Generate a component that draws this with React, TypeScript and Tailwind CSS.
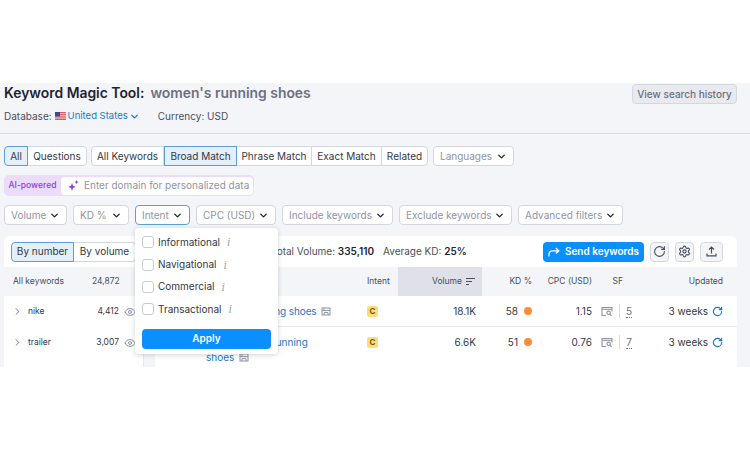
import React from "react"
import { ChevronDown, ChevronRight, Eye, RotateCw, Settings } from "lucide-react"

const font = { fontFamily: "Inter, 'Liberation Sans', sans-serif" }

function Flag() {
    return (
        <svg width="11" height="8" viewBox="0 0 11 8" className="shrink-0">
            <rect width="11" height="8" fill="#e0565b" />
            <rect y="1.2" width="11" height="1" fill="#f4d6d8" />
            <rect y="3.4" width="11" height="1" fill="#f4d6d8" />
            <rect y="5.6" width="11" height="1" fill="#f4d6d8" />
            <rect width="5" height="4.4" fill="#3c4a8f" />
        </svg>
    )
}

function Dropdown({ label, active, width }: { label: string; active?: boolean; width: string }) {
    return (
        <div className={`flex h-[20px] items-center justify-between rounded-[4px] border bg-white pl-[6px] pr-[6px] text-[10px] text-[#8f94a3] ${width} ${active ? "border-[#5a9fd8]" : "border-[#d5d7de]"}`}>
            <span className="whitespace-nowrap">{label}</span>
            <ChevronDown size={11} strokeWidth={3} className="shrink-0 text-[#1d2433]" />
        </div>
    )
}

function Segment({ label, active, width }: { label: string; active?: boolean; width: string }) {
    return (
        <div className={`flex h-[20px] items-center justify-center whitespace-nowrap border text-[10px] text-[#333845] first:rounded-l-[4px] last:rounded-r-[4px] ${width} ${active ? "z-10 border-[#5a9fd8] bg-[#e3eff9]" : "-ml-px border-[#d5d7de] bg-white"}`}>
            {label}
        </div>
    )
}

function InfoMark() {
    return <span className="ml-[7px] text-[12px] italic leading-none text-[#9ca1ad]" style={{ fontFamily: "'Liberation Serif', serif" }}>i</span>
}

function IntentOption({ label }: { label: string }) {
    return (
        <div className="flex h-[22.4px] items-center">
            <div className="h-[12px] w-[12px] rounded-[3px] border border-[#c9cbd4] bg-white" />
            <span className="ml-[4px] text-[10px] text-[#333845]">{label}</span>
            <InfoMark />
        </div>
    )
}

function SerpIcon() {
    return (
        <svg width="12" height="11" viewBox="0 0 12 11" fill="none" stroke="#8f94a3" strokeWidth="1.1">
            <path d="M5 9.5H1V1.5h10v4" />
            <path d="M1 3.3h10" />
            <circle cx="7.6" cy="6.8" r="1.7" />
            <path d="M9 8.2l1.6 1.6" />
        </svg>
    )
}

function SaveIcon() {
    return (
        <svg width="10" height="9" viewBox="0 0 10 9" fill="none" stroke="#8f94a3" strokeWidth="1">
            <rect x="1" y="1" width="8" height="7" />
            <path d="M1 3.6h8M3 1v2.6M7 8V5.6H3V8" />
        </svg>
    )
}

function SideRow({ name, count }: { name: string; count: string }) {
    return (
        <div className="flex h-[31px] items-center pl-[8px] text-[8.5px] text-[#333845]">
            <ChevronRight size={11} className="shrink-0 text-[#6c7080]" />
            <span className="ml-[5px] w-[60px]">{name}</span>
            <span className="w-[31px] text-right">{count}</span>
            <Eye size={12} className="ml-[5px] shrink-0 text-[#8f94a3]" />
        </div>
    )
}

function TableRow({ keyword, volume, kd, cpc, sf, border }: { keyword: React.ReactNode; volume: string; kd: string; cpc: string; sf: string; border?: boolean }) {
    return (
        <div className={`flex items-start text-[10px] text-[#333845] ${border ? "h-[31px] border-b border-[#e8e9ef]" : "h-[40px]"}`}>
            <div className="w-[212px] pl-[51px] pt-[8px] leading-[15px] text-[#1e77c9]">{keyword}</div>
            <div className="flex h-[30px] w-[31px] items-center">
                <span className="flex h-[11px] w-[11px] items-center justify-center rounded-[2px] bg-[#fbdc80] text-[8px] font-bold text-[#7a5a00]">C</span>
            </div>
            <div className="flex h-[30px] w-[78px] items-center justify-end">{volume}</div>
            <div className="flex h-[30px] w-[56px] items-center justify-end">
                {kd}
                <span className="ml-[6px] h-[8px] w-[8px] rounded-full bg-[#ff8c3a]" />
            </div>
            <div className="flex h-[30px] w-[60px] items-center justify-end">{cpc}</div>
            <div className="flex h-[30px] w-[40px] items-center justify-end text-[#6c7080]">
                <SerpIcon />
                <span className="mx-[6px] h-[14px] w-px bg-[#d5d7de]" />
                <span className="border-b border-dotted border-[#6c7080] leading-[12px]">{sf}</span>
            </div>
            <div className="flex h-[30px] w-[91px] items-center justify-end">
                3 weeks
                <RotateCw size={11} strokeWidth={2.6} className="ml-[4px] text-[#1e77c9]" />
            </div>
        </div>
    )
}

export default function App() {
    return (
        <div className="h-[450px] w-[750px] overflow-hidden bg-white pt-[83px]" style={font}>
            <div className="relative h-[284px] overflow-hidden bg-[#f4f5f9]">
                {/* Encabezado */}
                <div className="flex h-[51px] items-start justify-between border-b border-[#dcdde2] pl-[4px] pr-[13px]">
                    <div>
                        <h1 className="whitespace-nowrap text-[13.9px] font-semibold leading-[20px] text-[#1d2433]">
                            Keyword Magic Tool:
                            <span className="ml-[6px] text-[#6c7080]">women's running shoes</span>
                        </h1>
                        <div className="mt-[6px] flex items-center whitespace-nowrap text-[10px] leading-[14px] text-[#4a4f5c]">
                            Database:
                            <span className="ml-[3px]"><Flag /></span>
                            <span className="ml-[2px] text-[9.5px] text-[#1e77c9]">United States</span>
                            <ChevronDown size={11} strokeWidth={3} className="ml-[1px] text-[#1e77c9]" />
                            <span className="ml-[18px]">Currency: USD</span>
                        </div>
                    </div>
                    <div className="mt-[1px] flex h-[20px] w-[105px] items-center justify-center rounded-[4px] border border-[#d5d7de] bg-[#e9eaef] text-[10px] font-medium text-[#6c7080]">
                        View search history
                    </div>
                </div>

                {/* Pestañas */}
                <div className="mt-[12px] flex items-center pl-[4px]">
                    <div className="flex">
                        <Segment label="All" active width="w-[24px]" />
                        <Segment label="Questions" width="w-[60px]" />
                    </div>
                    <div className="ml-[5px] flex">
                        <Segment label="All Keywords" width="w-[73px]" />
                        <Segment label="Broad Match" active width="w-[73px]" />
                        <Segment label="Phrase Match" width="w-[76px]" />
                        <Segment label="Exact Match" width="w-[71px]" />
                        <Segment label="Related" width="w-[47px]" />
                    </div>
                    <div className="ml-[5px]"><Dropdown label="Languages" width="w-[81px]" /></div>
                </div>

                {/* Campo AI */}
                <div className="ml-[4px] mt-[9px] flex h-[21px] w-[250px] items-center rounded-[5px] bg-[#ecdcfb] pr-[1px]">
                    <span className="w-[57px] text-center text-[8.5px] font-medium text-[#8a3fe0]">AI-powered</span>
                    <div className="flex h-[18px] flex-1 items-center rounded-[4px] bg-white pl-[7px] text-[10px] text-[#8f94a3]">
                        <svg width="11" height="11" viewBox="0 0 11 11" fill="#8a3fe0">
                            <path d="M4 3l1 2.8L7.8 7 5 8 4 11 3 8 .2 7 3 5.8zM8.5 0l.6 1.5 1.5.6-1.5.6-.6 1.5-.6-1.5-1.5-.6 1.5-.6z" />
                        </svg>
                        <span className="ml-[5px] whitespace-nowrap">Enter domain for personalized data</span>
                    </div>
                </div>

                {/* Filtros */}
                <div className="ml-[4px] mt-[9px] flex gap-[6px]">
                    <Dropdown label="Volume" width="w-[63px]" />
                    <Dropdown label="KD %" width="w-[56px]" />
                    <Dropdown label="Intent" active width="w-[55px]" />
                    <Dropdown label="CPC (USD)" width="w-[80px]" />
                    <Dropdown label="Include keywords" width="w-[111px]" />
                    <Dropdown label="Exclude keywords" width="w-[113px]" />
                    <Dropdown label="Advanced filters" width="w-[105px]" />
                </div>

                {/* Tarjeta de resultados */}
                <div className="ml-[4px] mt-[11px] h-[131px] w-[733px] overflow-hidden rounded-t-[6px] bg-white">
                    <div className="flex h-[31px] items-center pl-[7px] pr-[14px] text-[10px] text-[#4a4f5c]">
                        <div className="flex">
                            <Segment label="By number" active width="w-[63px]" />
                            <Segment label="By volume" width="w-[63px]" />
                        </div>
                        <span className="ml-[135px] whitespace-nowrap">Total Volume: <b className="font-semibold text-[#1d2433]">335,110</b></span>
                        <span className="ml-[9px] whitespace-nowrap">Average KD: <b className="font-semibold text-[#1d2433]">25%</b></span>
                        <div className="ml-auto flex items-center gap-[6px]">
                            <div className="flex h-[20px] w-[101px] items-center justify-center rounded-[4px] bg-[#0a8fff] text-[10px] font-semibold text-white">
                                <svg width="12" height="10" viewBox="0 0 12 10" fill="none" stroke="#fff" strokeWidth="1.3" className="mr-[5px]">
                                    <path d="M1 9.5V7c0-2 1.5-3.2 3.5-3.2H10.5M7.8 1l3 2.8-3 2.8" />
                                </svg>
                                Send keywords
                            </div>
                            <div className="flex h-[20px] w-[19px] items-center justify-center rounded-[4px] border border-[#d5d7de] bg-[#f4f5f9] text-[#4a4f5c]"><RotateCw size={13} /></div>
                            <div className="flex h-[20px] w-[19px] items-center justify-center rounded-[4px] border border-[#d5d7de] bg-[#f4f5f9] text-[#4a4f5c]"><Settings size={13} /></div>
                            <div className="flex h-[20px] w-[23px] items-center justify-center rounded-[4px] border border-[#d5d7de] bg-[#f4f5f9]">
                                <svg width="11" height="11" viewBox="0 0 11 11" fill="none" stroke="#4a4f5c" strokeWidth="1.2">
                                    <path d="M5.5 7.5V1.2M3 3.5l2.5-2.5L8 3.5M1 7.5v2.3h9V7.5" />
                                </svg>
                            </div>
                        </div>
                    </div>

                    <div className="flex h-[100px]">
                        {/* Lista lateral */}
                        <div className="w-[140px] shrink-0 border-r border-[#e8e9ef]">
                            <div className="flex h-[29px] items-center bg-[#f4f5f9] pl-[9px] text-[8.5px] text-[#4a4f5c]">
                                <span className="w-[79px]">All keywords</span>
                                <span className="w-[27px] text-right">24,872</span>
                            </div>
                            <SideRow name="nike" count="4,412" />
                            <SideRow name="trailer" count="3,007" />
                        </div>
                        <div className="w-[11px] shrink-0 bg-[#f4f5f9]" />

                        {/* Tabla */}
                        <div className="flex-1">
                            <div className="flex h-[29px] items-center bg-[#f4f5f9] text-[8.5px] text-[#4a4f5c]">
                                <div className="w-[212px]" />
                                <div className="w-[31px]">Intent</div>
                                <div className="flex h-full w-[84px] items-center justify-end bg-[#dfe0e8] pr-[7px]">
                                    Volume
                                    <svg width="9" height="7" viewBox="0 0 9 7" stroke="#4a4f5c" strokeWidth="1" className="ml-[4px]">
                                        <path d="M0 .5h9M0 3.5h6M0 6.5h3" />
                                    </svg>
                                </div>
                                <div className="w-[50px] text-right">KD %</div>
                                <div className="w-[60px] text-right">CPC (USD)</div>
                                <div className="w-[31px] text-right">SF</div>
                                <div className="w-[100px] text-right">Updated</div>
                            </div>
                            <TableRow
                                keyword={<span className="whitespace-nowrap tracking-[-0.1px]">women's running shoes <span className="ml-[2px] inline-block align-[-1px]"><SaveIcon /></span></span>}
                                volume="18.1K" kd="58" cpc="1.15" sf="5" border
                            />
                            <TableRow
                                keyword={<span>women's trail running<br />shoes <span className="ml-[2px] inline-block align-[-1px]"><SaveIcon /></span></span>}
                                volume="6.6K" kd="51" cpc="0.76" sf="7"
                            />
                        </div>
                    </div>
                </div>

                {/* Menú Intent */}
                <div className="absolute left-[135px] top-[145px] h-[126px] w-[143px] rounded-[4px] bg-white px-[7px] pt-[3px] shadow-[0_1px_5px_rgba(30,35,60,0.2)]">
                    <IntentOption label="Informational" />
                    <IntentOption label="Navigational" />
                    <IntentOption label="Commercial" />
                    <IntentOption label="Transactional" />
                    <div className="mt-[8px] flex h-[20px] items-center justify-center rounded-[4px] bg-[#0a8fff] text-[10px] font-semibold text-white">Apply</div>
                </div>
            </div>
        </div>
    )
}
